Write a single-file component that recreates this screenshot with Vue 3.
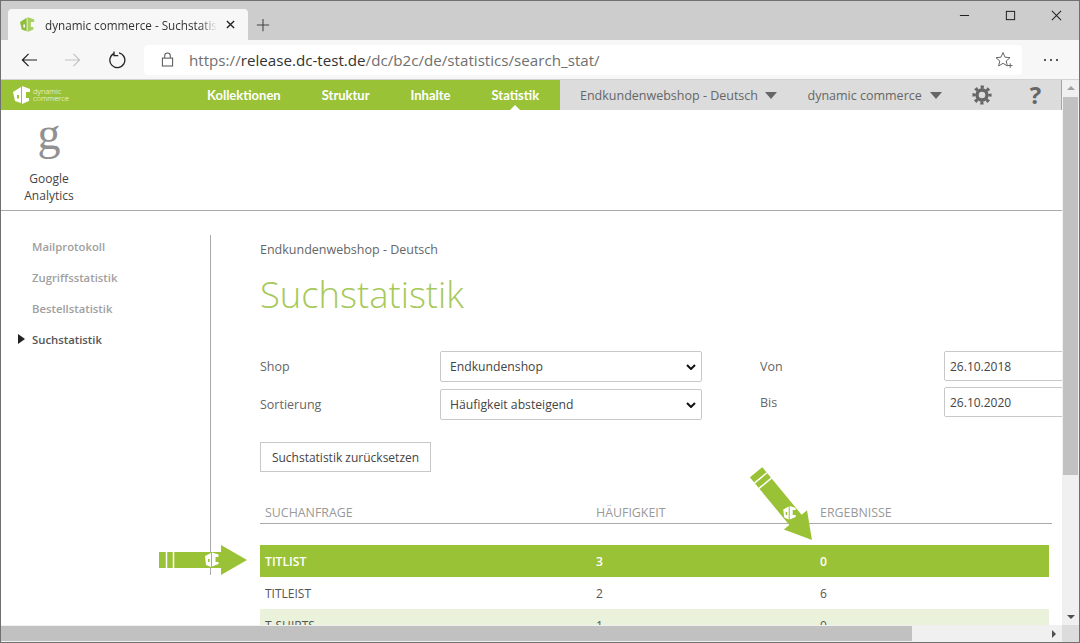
<script setup>
const navItems = [
  { label: 'Kollektionen', active: false },
  { label: 'Struktur', active: false },
  { label: 'Inhalte', active: false },
  { label: 'Statistik', active: true },
]
const sideItems = [
  { label: 'Mailprotokoll', active: false },
  { label: 'Zugriffsstatistik', active: false },
  { label: 'Bestellstatistik', active: false },
  { label: 'Suchstatistik', active: true },
]
const rows = [
  { q: 'TITLIST', h: 3, e: 0, cls: 'hit' },
  { q: 'TITLEIST', h: 2, e: 6, cls: '' },
  { q: 'T-SHIRTS', h: 1, e: 0, cls: 'alt' },
]
</script>

<template>
  <div class="window">
    <div class="tabstrip">
      <div class="tab">
        <svg class="favicon" viewBox="0 0 18 18">
          <path d="M0 6 8 1v16l-6-2z" fill="#8fbf3a" />
          <path d="M9 0l8 3v3h-4v6h3v3l-7 3z" fill="#a9cf63" />
          <path d="M4 9h2v3.500H4z" fill="#f7f7f7" />
        </svg>
        <span class="tab-title">dynamic commerce - Suchstatistik</span>
        <svg class="tab-close" viewBox="0 0 10 10"><path d="M1 1l8 8M9 1l-8 8" /></svg>
      </div>
      <svg class="new-tab" viewBox="0 0 16 16"><path d="M8 1v14M1 8h14" /></svg>
      <div class="win-controls">
        <svg viewBox="0 0 12 12"><path d="M1 6h10" /></svg>
        <svg viewBox="0 0 12 12"><rect x="1.500" y="1.500" width="9" height="9" /></svg>
        <svg viewBox="0 0 12 12"><path d="M1 1l10 10M11 1L1 11" /></svg>
      </div>
    </div>

    <div class="toolbar">
      <svg class="nav-ico" viewBox="0 0 18 16"><path d="M17 8H1.500M8 1.500 1.500 8 8 14.500" /></svg>
      <svg class="nav-ico off" viewBox="0 0 18 16"><path d="M1 8h15.500M10 1.500 16.500 8 10 14.500" /></svg>
      <svg class="nav-ico reload" viewBox="0 0 18 18"><path d="M6.200 2.300A7.500 7.500 0 1 0 11 1.800M6 0.500v4.200h4.200" /></svg>
      <div class="address">
        <svg class="lock" viewBox="0 0 14 16"><rect x="1.500" y="6.500" width="11" height="8.500" /><path d="M4 6.500V4a3 3 0 0 1 6 0v2.500" /></svg>
        <span class="url"><span class="dim">https://</span>release.dc-test.de<span class="dim">/dc/b2c/de/statistics/search_stat/</span></span>
        <svg class="star" viewBox="0 0 18 18"><path d="M8 1.500l2 4.700 5 .5-3.800 3.300 1.200 5L8 12.300 3.600 15l1.200-5L1 6.700l5-.5z" /><path d="M13 14.500h4.500M15.200 12.300v4.500" /></svg>
      </div>
      <div class="more"><i></i><i></i><i></i></div>
    </div>

    <div class="viewport">
      <div class="page">
        <header class="topbar">
          <div class="topbar-green">
            <div class="brand">
              <svg class="brand-mark" viewBox="0 0 18 18">
                <path d="M0 6 8 1v16l-6-2z" fill="#fff" />
                <path d="M9 0l8 3v3h-4v6h3v3l-7 3z" fill="#fff" />
                <path d="M4 9h2v3.500H4z" fill="#9ac236" />
              </svg>
              <div class="brand-text"><span>dynamic</span><span>commerce</span></div>
            </div>
            <nav class="main-nav">
              <a v-for="n in navItems" :key="n.label" :class="{ active: n.active }">{{ n.label }}</a>
            </nav>
          </div>
          <div class="topbar-gray">
            <span class="drop first">Endkundenwebshop - Deutsch<i class="caret"></i></span>
            <span class="drop second">dynamic commerce<i class="caret"></i></span>
            <svg class="gear" viewBox="0 0 24 24">
              <circle cx="12" cy="12" r="6" class="gear-ring" />
              <circle cx="12" cy="12" r="9.500" class="gear-teeth" />
            </svg>
            <span class="help">?</span>
          </div>
        </header>

        <section class="appbar">
          <div class="app-tile">
            <span class="g-mark">g</span>
            <span class="app-label">Google<br />Analytics</span>
          </div>
        </section>

        <div class="main">
          <aside class="sidebar">
            <a v-for="s in sideItems" :key="s.label" :class="{ active: s.active }">{{ s.label }}</a>
          </aside>
          <section class="content">
            <div class="crumb">Endkundenwebshop - Deutsch</div>
            <h1>Suchstatistik</h1>
            <div class="filters">
              <div class="filter-col left">
                <label>Shop
                  <span class="select-wrap">
                    <select><option>Endkundenshop</option></select>
                    <svg class="chev" viewBox="0 0 10 6"><path d="M1 1l4 4 4-4" /></svg>
                  </span>
                </label>
                <label>Sortierung
                  <span class="select-wrap">
                    <select><option>Häufigkeit absteigend</option></select>
                    <svg class="chev" viewBox="0 0 10 6"><path d="M1 1l4 4 4-4" /></svg>
                  </span>
                </label>
              </div>
              <div class="filter-col right">
                <label>Von<input value="26.10.2018" /></label>
                <label>Bis<input value="26.10.2020" /></label>
              </div>
            </div>
            <button class="reset">Suchstatistik zurücksetzen</button>
            <div class="table">
              <div class="thead">
                <span>SUCHANFRAGE</span><span>HÄUFIGKEIT</span><span>ERGEBNISSE</span>
              </div>
              <div v-for="r in rows" :key="r.q" class="tr" :class="r.cls">
                <span>{{ r.q }}</span><span>{{ r.h }}</span><span>{{ r.e }}</span>
              </div>
            </div>
          </section>
        </div>

        <svg class="arrow arrow-h" viewBox="0 0 88 30">
          <path d="M0 7h62V0l26 15-26 15v-7H0z" fill="#9ac236" />
          <path d="M7.500 7v16M14.500 7v16" stroke="#fff" stroke-width="1.500" />
          <path d="M46 11l6-3v14l-5-2zM53 7.500l6.500 2V12h-3v5h3v2l-6.500 2.500z" fill="#fff" />
          <path d="M49 14h1.500v3H49z" fill="#9ac236" />
        </svg>
        <svg class="arrow arrow-d" viewBox="0 0 88 30">
          <path d="M0 7h62V0l26 15-26 15v-7H0z" fill="#9ac236" />
          <path d="M7.500 7v16M14.500 7v16" stroke="#fff" stroke-width="1.500" />
          <g transform="rotate(-50.500 53 15)">
            <path d="M46.500 11.500l5.500-3v13l-4.500-2zM53 8l6 2v2h-3v5h3v2l-6 2.500z" fill="#fff" />
            <path d="M49 14h1.500v3H49z" fill="#9ac236" />
          </g>
        </svg>
      </div>

      <div class="vscroll">
        <i class="tri up"></i>
        <div class="vtrack"><div class="vthumb"></div></div>
        <i class="tri down"></i>
      </div>
      <div class="hscroll">
        <div class="htrack"><div class="hthumb"></div></div>
        <i class="tri righta"></i>
      </div>
      <div class="corner"></div>
    </div>
  </div>
</template>

<style>
html, body { margin: 0; padding: 0; }
</style>

<style scoped>
.window {
  width: 1080px;
  height: 643px;
  box-sizing: border-box;
  border: 1px solid #707070;
  display: flex;
  flex-direction: column;
  overflow: hidden;
  font-family: "Open Sans", "Noto Sans", sans-serif;
  background: #fff;
  color: #555;
}

/* browser chrome */
.tabstrip {
  height: 39px;
  flex: none;
  background: #cdcdcd;
  display: flex;
  align-items: flex-end;
  padding-left: 7px;
  position: relative;
}
.tab {
  width: 240px;
  height: 31px;
  background: #f7f7f7;
  border-radius: 4px 4px 0 0;
  display: flex;
  align-items: center;
  box-sizing: border-box;
  padding-left: 12px;
  position: relative;
}
.favicon { width: 15px; height: 15px; flex: none; }
.tab-title {
  margin-left: 10px;
  width: 172px;
  white-space: nowrap;
  overflow: hidden;
  font-size: 11.700px;
  color: #333;
  -webkit-mask-image: linear-gradient(to right, #000 90%, transparent);
  mask-image: linear-gradient(to right, #000 90%, transparent);
}
.tab-close { width: 9px; height: 9px; margin-left: 9px; fill: none; stroke: #222; stroke-width: 1.500; }
.new-tab { width: 14px; height: 14px; margin: 0 0 8px 8px; fill: none; stroke: #444; stroke-width: 1.200; }
.win-controls {
  margin-left: auto;
  align-self: flex-start;
  display: flex;
  margin-top: 9px;
  margin-right: 17px;
  gap: 35px;
}
.win-controls svg { width: 11px; height: 11px; fill: none; stroke: #222; stroke-width: 1.100; }

.toolbar {
  height: 40px;
  flex: none;
  background: #f7f7f7;
  border-bottom: 1px solid #d2d2d2;
  box-sizing: border-box;
  display: flex;
  align-items: center;
  padding-left: 20px;
}
.nav-ico { width: 17px; height: 16px; fill: none; stroke: #222; stroke-width: 1.300; flex: none; margin-right: 26px; }
.nav-ico.off { stroke: #c4c4c4; margin-right: 27px; }
.nav-ico.reload { width: 18px; height: 18px; margin-right: 18px; }
.address {
  width: 878px;
  height: 30px;
  background: #fff;
  border-radius: 4px;
  display: flex;
  align-items: center;
  flex: none;
  box-sizing: border-box;
  padding-left: 17px;
}
.lock { width: 13px; height: 15px; fill: none; stroke: #555; stroke-width: 1.100; flex: none; }
.url { margin-left: 15px; font-size: 15.170px; color: #333; white-space: nowrap; }
.dim { color: #6f6f6f; }
.star { width: 18px; height: 18px; margin-left: auto; margin-right: 9px; fill: none; stroke: #666; stroke-width: 1; }
.more { display: flex; gap: 4px; margin-left: 22px; }
.more i { width: 2px; height: 2px; background: #222; border-radius: 50%; }

/* viewport */
.viewport {
  flex: 1;
  min-height: 0;
  display: grid;
  grid-template-columns: 1fr 17px;
  grid-template-rows: 1fr 17px;
}
.page { position: relative; overflow: hidden; min-width: 0; min-height: 0; }

.topbar { display: flex; height: 30px; border-right: 1px solid #9ac236; }
.topbar-green {
  width: 559px;
  background: #9ac236;
  display: flex;
  align-items: center;
  flex: none;
  padding-left: 12px;
  box-sizing: border-box;
}
.brand { display: flex; align-items: center; gap: 2px; width: 194px; flex: none; }
.brand-mark { width: 18px; height: 18px; flex: none; }
.brand-text { display: flex; flex-direction: column; font-size: 7.500px; line-height: 7.500px; color: #fff; font-weight: 300; }
.main-nav { display: flex; gap: 41px; height: 100%; align-items: center; }
.main-nav a { font-family: "Lato", "Open Sans", sans-serif; font-size: 13px; font-weight: 700; color: #fff; position: relative; line-height: 30px; }
.main-nav a.active::after {
  content: "";
  position: absolute;
  left: 50%;
  bottom: 0;
  margin-left: -5px;
  border: 5px solid transparent;
  border-top: 0;
  border-bottom-color: #fff;
}
.topbar-gray {
  flex: 1;
  background: #dcdcdc;
  display: flex;
  align-items: center;
  font-size: 12.500px;
  color: #666;
  padding-left: 20px;
}
.drop { display: flex; align-items: center; white-space: nowrap; }
.caret {
  border: 6.500px solid transparent;
  border-top: 7px solid #666;
  border-bottom: 0;
  margin-left: 7px;
}
.drop.second { margin-left: 30.500px; }
.drop.second .caret { margin-left: 8px; }
.gear { width: 20px; height: 20px; margin-left: 30px; flex: none; fill: none; stroke: #666; }
.gear-ring { stroke-width: 4; }
.gear-teeth { stroke-width: 4; stroke-dasharray: 3.730 3.730; stroke-dashoffset: 1.865; }
.help { font-size: 24px; font-weight: 700; color: #666; margin-left: 38px; line-height: 30px; }

.appbar {
  height: 101px;
  box-sizing: border-box;
  border-bottom: 1px solid #aaa;
  background: #fff;
  padding-left: 13px;
}
.app-tile { width: 70px; display: flex; flex-direction: column; align-items: center; }
.g-mark {
  font-family: "Liberation Serif", serif;
  font-size: 46px;
  line-height: 44px;
  height: 58px;
  color: #919191;
  margin-top: 2px;
}
.app-label { font-size: 12px; line-height: 17px; text-align: center; color: #444; }

.main { display: flex; align-items: flex-start; }
.sidebar {
  width: 210px;
  flex: none;
  height: 340px;
  margin-top: 24px;
  border-right: 1px solid #aaa;
  box-sizing: border-box;
  display: flex;
  flex-direction: column;
  gap: 14px;
  padding: 3px 0 0 31px;
}
.sidebar a { font-size: 11.300px; font-weight: 600; line-height: 17px; color: #a0a0a0; position: relative; }
.sidebar a.active { color: #555; }
.sidebar a.active::before {
  content: "";
  position: absolute;
  left: -14px;
  top: 3px;
  border: 5.500px solid transparent;
  border-left: 7px solid #222;
  border-right: 0;
}
.content { padding: 30px 0 0 49px; flex: 1; min-width: 0; }
.crumb { font-size: 12.500px; line-height: 17px; color: #666; }
h1 { margin: 11px 0 0; font-size: 36.400px; line-height: 50px; font-weight: 300; color: #a6c95a; }
.filters { display: flex; margin-top: 32px; height: 91px; }
.filter-col { display: flex; flex-direction: column; flex: none; }
.filter-col label { display: grid; align-items: center; font-size: 12.500px; color: #666; }
.filter-col.left { width: 500px; gap: 7px; }
.filter-col.left label { grid-template-columns: 180px 262px; }
.filter-col.right { gap: 6px; }
.filter-col.right label { grid-template-columns: 184px 130px; }
.select-wrap { position: relative; display: block; height: 31px; }
.chev {
  position: absolute;
  right: 6px;
  top: 13px;
  width: 10px;
  height: 6px;
  fill: none;
  stroke: #111;
  stroke-width: 2;
  background: #fff;
  pointer-events: none;
}
select {
  width: 262px;
  height: 31px;
  box-sizing: border-box;
  border: 1px solid #c8c8c8;
  border-radius: 2px;
  background: #fff;
  font: inherit;
  font-size: 12.200px;
  color: #444;
  padding-left: 9px;
  appearance: none;
}
input {
  width: 130px;
  height: 30px;
  box-sizing: border-box;
  border: 1px solid #c8c8c8;
  border-radius: 2px;
  font: inherit;
  font-size: 12px;
  color: #444;
  padding-left: 5px;
}
.reset {
  display: block;
  height: 30px;
  width: 171px;
  border: 1px solid #c8c8c8;
  background: #fff;
  font: inherit;
  font-size: 12px;
  color: #444;
  padding: 0;
}
.table { margin-top: 27px; width: 792px; }
.thead {
  display: grid;
  grid-template-columns: 331px 224px 1fr;
  height: 25px;
  box-sizing: border-box;
  padding: 2px 0 0 5px;
  border-bottom: 1px solid #aaa;
  font-size: 12.400px;
  color: #999;
  align-items: center;
}
.tr {
  display: grid;
  grid-template-columns: 331px 224px 1fr;
  width: 789px;
  box-sizing: border-box;
  height: 32px;
  padding-left: 5px;
  font-size: 12px;
  color: #555;
  align-items: center;
}
.thead + .tr { margin-top: 21px; }
.tr.hit { background: #9ac236; color: #fff; font-weight: 600; font-size: 12.200px; }
.tr.alt { background: #ebf2dc; }

.arrow { position: absolute; width: 88px; height: 30px; }
.arrow-h { left: 158px; top: 465px; }
.arrow-d { left: 739px; top: 411px; transform: rotate(50.500deg); }

/* scrollbars */
.vscroll { background: #f0f0f0; display: flex; flex-direction: column; align-items: center; grid-column: 2; grid-row: 1; }
.vtrack { flex: 1; width: 100%; padding: 0 1px; box-sizing: border-box; }
.vthumb { height: 378px; background: #c1c1c1; }
.hscroll { background: #f0f0f0; display: flex; align-items: center; grid-column: 1; grid-row: 2; }
.htrack { flex: 1; height: 100%; box-sizing: border-box; padding: 1px 0; }
.hthumb { width: 911px; height: 100%; background: #c1c1c1; }
.corner { background: #dcdcdc; grid-column: 2; grid-row: 2; }
.tri { flex: none; display: block; width: 0; height: 0; border: 4px solid transparent; }
.tri.up { border-top: 0; border-bottom: 4px solid #a0a0a0; margin: 6px 0 7px; }
.tri.down { border-bottom: 0; border-top: 4px solid #505050; margin: 7px 0 6px; }
.tri.righta { border-right: 0; border-left: 4px solid #505050; margin: 0 6px 0 7px; }
</style>
